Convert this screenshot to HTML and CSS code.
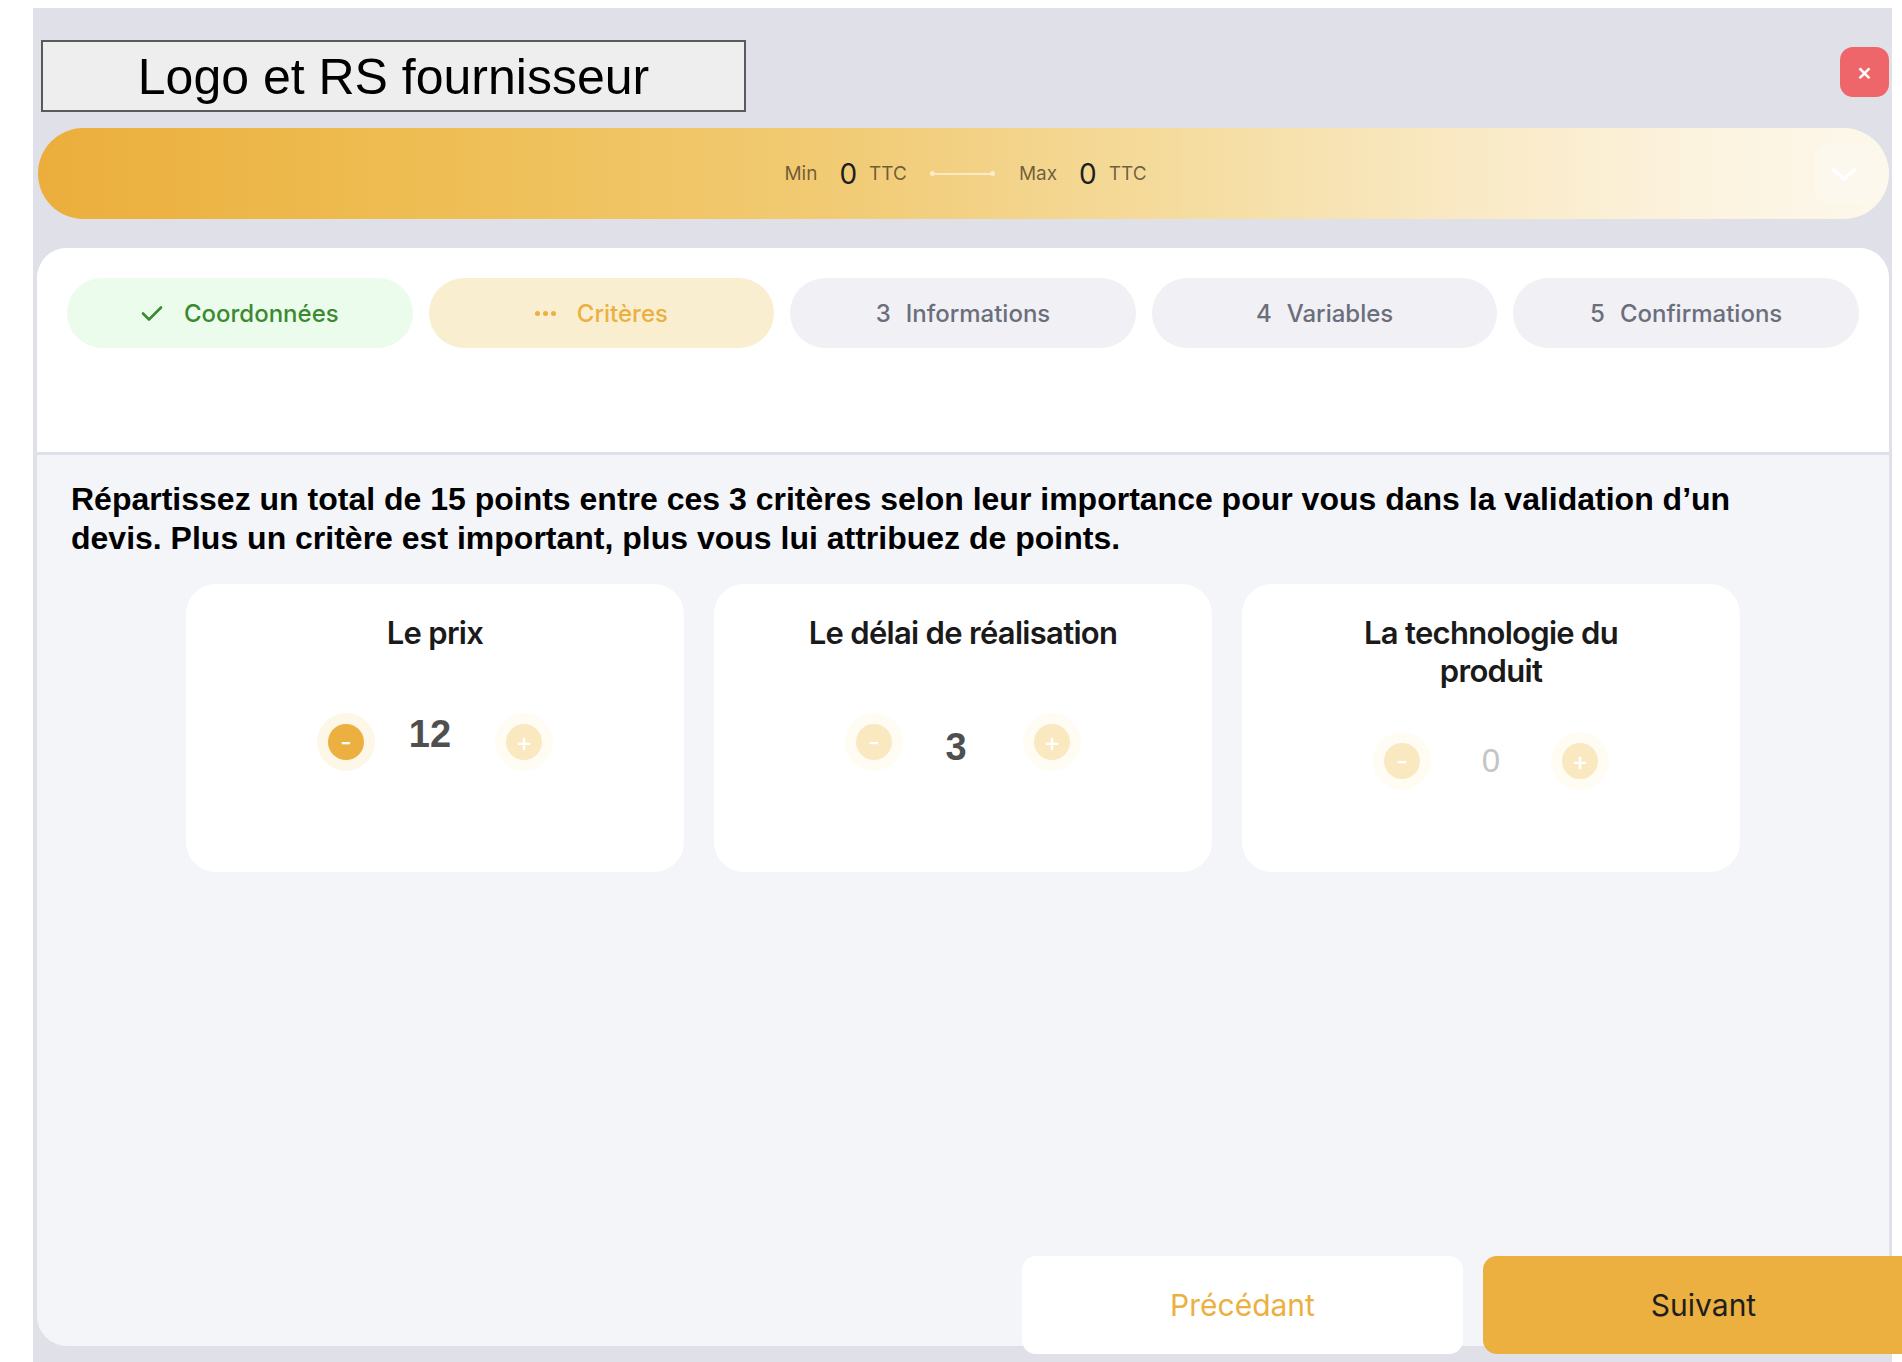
FILE: index.html
```html
<!DOCTYPE html>
<html lang="fr">
<head>
<meta charset="utf-8">
<title>Critères</title>
<link rel="stylesheet" href="styles.css">
</head>
<body>
<div class="panel">
  <header class="header">
    <div class="logo-box">Logo et RS fournisseur</div>
    <button class="close-btn" type="button">×</button>
  </header>

  <div class="price-bar">
    <div class="price-range">
      <span class="lbl">Min</span>
      <span class="num">0</span>
      <span class="lbl ttc">TTC</span>
      <span class="range-line"><i class="dot"></i><i class="seg"></i><i class="dot"></i></span>
      <span class="lbl">Max</span>
      <span class="num">0</span>
      <span class="lbl ttc">TTC</span>
    </div>
    <div class="chevron-box">
      <svg width="28" height="16" viewBox="0 0 28 16"><path d="M3 3 L14 13 L25 3" fill="none" stroke="#fff" stroke-width="3.5" stroke-linecap="round" stroke-linejoin="round"/></svg>
    </div>
  </div>

  <section class="card">
    <div class="steps">
      <div class="step done">
        <svg class="check" width="22" height="17" viewBox="0 0 22 17"><path d="M2 8.5 L8 14.5 L20 2.5" fill="none" stroke="#3b8a32" stroke-width="2.6" stroke-linecap="round" stroke-linejoin="round"/></svg>
        <span>Coordonnées</span>
      </div>
      <div class="step current">
        <span class="dots"><i></i><i></i><i></i></span>
        <span>Critères</span>
      </div>
      <div class="step"><span class="n">3</span><span>Informations</span></div>
      <div class="step"><span class="n">4</span><span>Variables</span></div>
      <div class="step"><span class="n">5</span><span>Confirmations</span></div>
    </div>

    <div class="body">
      <p class="intro">Répartissez un total de 15 points entre ces 3 critères selon leur importance pour vous dans la validation d’un devis. Plus un critère est important, plus vous lui attribuez de points.</p>

      <div class="criteria">
        <div class="crit">
          <h3 class="crit-title">Le prix</h3>
          <div class="counter">
            <button class="cbtn active" type="button">-</button>
            <span class="value v-up">12</span>
            <button class="cbtn" type="button">+</button>
          </div>
        </div>
        <div class="crit">
          <h3 class="crit-title">Le délai de réalisation</h3>
          <div class="counter">
            <button class="cbtn" type="button">-</button>
            <span class="value v-down">3</span>
            <button class="cbtn" type="button">+</button>
          </div>
        </div>
        <div class="crit">
          <h3 class="crit-title">La technologie du produit</h3>
          <div class="counter">
            <button class="cbtn" type="button">-</button>
            <span class="value zero">0</span>
            <button class="cbtn" type="button">+</button>
          </div>
        </div>
      </div>

      <div class="footer">
        <button class="btn prev" type="button">Précédant</button>
        <button class="btn next" type="button">Suivant</button>
      </div>
    </div>
  </section>
</div>
</body>
</html>
```

FILE: styles.css
```css
html, body {
  margin: 0;
  padding: 0;
  background: #ffffff;
  overflow: hidden;
}
body {
  font-family: Inter, "Noto Sans", sans-serif;
  width: 1902px;
  height: 1362px;
}
button {
  font-family: inherit;
  border: none;
  cursor: pointer;
  padding: 0;
}

.panel {
  margin: 8px 0 0 33px;
  width: 1859px;
  height: 1354px;
  box-sizing: border-box;
  padding: 32px 3px 16px 4px;
  background: #dfe0e8;
  display: flex;
  flex-direction: column;
}

/* header */
.header {
  display: flex;
  justify-content: space-between;
  align-items: flex-start;
  height: 72px;
}
.logo-box {
  margin-left: 4px;
  width: 705px;
  height: 72px;
  box-sizing: border-box;
  border: 2px solid #5a5a5a;
  background: #eeeeee;
  font-family: "Liberation Sans", Arial, sans-serif;
  font-size: 50px;
  line-height: 70px;
  text-align: center;
  color: #000;
}
.close-btn {
  margin-top: 7px;
  width: 49px;
  height: 50px;
  border-radius: 13px;
  background: #ee666a;
  color: #fff;
  font-size: 24px;
  line-height: 50px;
  font-weight: 500;
}

/* price bar */
.price-bar {
  margin: 16px 0 0 1px;
  height: 91px;
  border-radius: 46px;
  background: linear-gradient(90deg, #ebae3c 0%, #eebd52 20%, #f1ca72 42%, #f5dc9f 62%, #f9e8c2 76%, #fcf3df 90%, #fdf8ec 100%);
  display: grid;
  grid-template-columns: 1fr auto 1fr;
  align-items: center;
  padding-right: 16px;
  padding-left: 16px;
}
.price-range {
  grid-column: 2;
  display: flex;
  align-items: center;
  margin-left: -12px;
  margin-right: -16px;
}
.lbl {
  font-size: 19px;
  color: rgba(60, 50, 30, 0.72);
  margin-right: 22px;
}
.lbl.ttc {
  margin-right: 23px;
}
.price-range .lbl.ttc:last-child {
  margin-right: 0;
}
.num {
  font-size: 28px;
  color: #1e1e1e;
  margin-right: 12px;
  line-height: 1;
}
.range-line {
  display: flex;
  align-items: center;
  width: 65px;
  margin-right: 24px;
}
.range-line .dot {
  width: 5px;
  height: 5px;
  border-radius: 50%;
  background: rgba(255, 255, 255, 0.6);
}
.range-line .seg {
  flex: 1;
  height: 2px;
  background: rgba(255, 255, 255, 0.55);
}
.chevron-box {
  grid-column: 3;
  justify-self: end;
  width: 59px;
  height: 59px;
  border-radius: 14px;
  background: rgba(255, 255, 255, 0.22);
  display: flex;
  align-items: center;
  justify-content: center;
}

/* main card */
.card {
  margin-top: 29px;
  flex: 1;
  background: #f4f5f9;
  border-radius: 30px;
  display: flex;
  flex-direction: column;
  min-height: 0;
}
.steps {
  background: #ffffff;
  border-radius: 30px 30px 0 0;
  padding: 30px 30px 104px;
  border-bottom: 3px solid #dfe0e8;
  display: flex;
  gap: 16px;
}
.step {
  flex: 1;
  height: 70px;
  border-radius: 35px;
  background: #f0f0f5;
  color: #6b6e7b;
  font-size: 24px;
  font-weight: 500;
  display: flex;
  align-items: center;
  justify-content: center;
  gap: 15px;
}
.step.done {
  background: #ebfced;
  color: #3b8a32;
  gap: 21px;
}
.step.current {
  background: #faeed0;
  color: #ebb03f;
  gap: 21px;
}
.dots {
  display: flex;
  gap: 3px;
}
.dots i {
  width: 5px;
  height: 5px;
  border-radius: 50%;
  background: #ebb03f;
}

.body {
  flex: 1;
  display: flex;
  flex-direction: column;
  padding: 25px 34px 0;
}
.intro {
  margin: 0 70px 0 0;
  font-family: "Liberation Sans", Arial, sans-serif;
  font-weight: bold;
  font-size: 32px;
  line-height: 39px;
  color: #000;
}

.criteria {
  margin-top: 26px;
  display: flex;
  justify-content: center;
  gap: 30px;
}
.crit {
  width: 498px;
  height: 288px;
  box-sizing: border-box;
  background: #ffffff;
  border-radius: 30px;
  padding: 30px 70px 40px;
  display: flex;
  flex-direction: column;
}
.crit-title {
  margin: 0;
  font-size: 31px;
  line-height: 38px;
  font-weight: 600;
  letter-spacing: -0.7px;
  color: #1a1a1a;
  text-align: center;
}
.counter {
  flex: 1;
  display: flex;
  align-items: center;
  justify-content: center;
}
.cbtn {
  width: 36px;
  height: 36px;
  border-radius: 50%;
  background: #fae8c0;
  box-shadow: 0 0 0 11px #fffcf4;
  color: #fff;
  font-size: 25px;
  line-height: 36px;
  font-weight: 500;
}
.cbtn.active {
  background: #ebb03f;
  box-shadow: 0 0 0 11px #fdf7e8;
}
.value {
  width: 142px;
  text-align: center;
  font-family: "Liberation Sans", Arial, sans-serif;
  font-weight: bold;
  font-size: 38px;
  color: #4f4f4f;
  line-height: 44px;
}
.value.v-up {
  margin-bottom: 16px;
  padding-right: 10px;
  box-sizing: border-box;
}
.value.v-down {
  margin-top: 10px;
  padding-right: 14px;
  box-sizing: border-box;
}
.value.zero {
  font-weight: normal;
  font-size: 33px;
  color: #c4c4c4;
}

.footer {
  margin-top: auto;
  margin-right: -69px;
  margin-bottom: -8px;
  display: flex;
  justify-content: flex-end;
  gap: 20px;
}
.btn {
  width: 441px;
  height: 98px;
  border-radius: 14px;
  font-size: 30px;
}
.btn.prev {
  background: #ffffff;
  color: #ebb03f;
}
.btn.next {
  background: #ebb03f;
  color: #1e1e1e;
}
```
